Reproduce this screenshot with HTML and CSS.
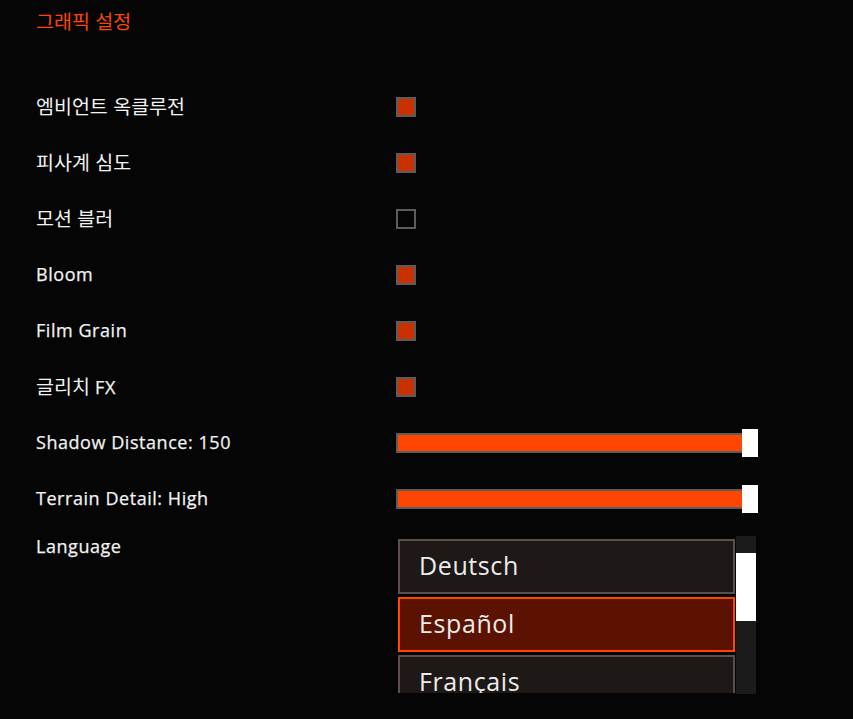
FILE: index.html
```html
<!DOCTYPE html>
<html lang="ko">
<head>
    <meta charset="UTF-8">
    <meta name="viewport" content="width=device-width, initial-scale=1.0">
    <title>그래픽 설정</title>
    <link rel="stylesheet" href="styles.css">
</head>
<body>
    <div class="panel">
        <div class="panel__title"><span class="ko">그래픽 설정</span></div>

        <div class="settings">
            <div class="row">
                <div class="row__label"><span class="ko">엠비언트 옥클루전</span></div>
                <div class="check check--on"></div>
            </div>
            <div class="row">
                <div class="row__label"><span class="ko">피사계 심도</span></div>
                <div class="check check--on"></div>
            </div>
            <div class="row">
                <div class="row__label"><span class="ko">모션 블러</span></div>
                <div class="check"></div>
            </div>
            <div class="row">
                <div class="row__label">Bloom</div>
                <div class="check check--on"></div>
            </div>
            <div class="row">
                <div class="row__label">Film Grain</div>
                <div class="check check--on"></div>
            </div>
            <div class="row">
                <div class="row__label"><span class="ko">글리치</span> FX</div>
                <div class="check check--on"></div>
            </div>
            <div class="row">
                <div class="row__label">Shadow Distance: 150</div>
                <div class="slider">
                    <div class="slider__track"><div class="slider__fill"></div></div>
                    <div class="slider__handle"></div>
                </div>
            </div>
            <div class="row">
                <div class="row__label">Terrain Detail: High</div>
                <div class="slider">
                    <div class="slider__track"><div class="slider__fill"></div></div>
                    <div class="slider__handle"></div>
                </div>
            </div>
            <div class="row row--top">
                <div class="row__label">Language</div>
                <div class="lang">
                    <div class="lang__list">
                        <div class="lang__item">Deutsch</div>
                        <div class="lang__item lang__item--active">Español</div>
                        <div class="lang__item">Français</div>
                    </div>
                    <div class="lang__bar"><div class="lang__thumb"></div></div>
                </div>
            </div>
        </div>
    </div>
</body>
</html>
```

FILE: styles.css
```css
*{
    margin: 0;
    padding: 0;
    box-sizing: border-box;
}

body {
    background: #050505;
    color: #f2f2f2;
    font-family: "Open Sans", "Noto Sans CJK KR", sans-serif;
    font-weight: 500;
    font-size: 18px;
    letter-spacing: 0.55px;
    -webkit-text-stroke: 0.25px #f2f2f2;
}

.ko {
    font-family: "Noto Sans CJK KR", sans-serif;
    font-weight: 400;
    font-size: 19.5px;
    letter-spacing: 0;
    -webkit-text-stroke: 0;
}

.panel {
    padding: 10px 36px 0 36px;
}

.panel__title {
    color: #ff4500;
    line-height: 22px;
    height: 22px;
    margin-bottom: 47px;
}

.row {
    display: grid;
    grid-template-columns: 360px 1fr;
    align-items: center;
    height: 56px;
}

.row--top {
    align-items: start;
    height: auto;
}

.row__label {
    line-height: 20px;
    height: 22px;
    white-space: nowrap;
}

.row--top .row__label {
    margin-top: 9px;
}

/* checkbox */
.check {
    width: 20px;
    height: 20px;
    border: 2px solid #5c5c5c;
    background: #050505;
}

.check--on {
    background: #c93200;
}

/* slider */
.slider {
    display: flex;
    align-items: center;
    width: 362px;
}

.slider__track {
    width: 346px;
    height: 20px;
    border: 2px solid #5c5c5c;
    border-right: 0;
    background: #1a1a1a;
}

.slider__fill {
    width: 100%;
    height: 100%;
    background: #ff4500;
}

.slider__handle {
    width: 16px;
    height: 28px;
    background: #ffffff;
}

/* language list */
.lang {
    display: flex;
    width: 360px;
    height: 158px;
    margin-top: 9px;
}

.lang__list {
    flex: 1;
    overflow: hidden;
    display: flex;
    flex-direction: column;
    gap: 3px;
    padding: 3px 1px 0 2px;
    height: 157px;
}

.lang__item {
    flex: none;
    height: 55px;
    border: 2px solid #5a4f4c;
    background: #1e1816;
    padding: 0 0 4px 19px;
    display: flex;
    align-items: center;
    font-size: 25px;
    font-weight: 400;
    letter-spacing: 0.6px;
    -webkit-text-stroke: 0;
    color: #ececec;
}

.lang__item--active {
    border-color: #ff4500;
    background: #5c1200;
}

.lang__bar {
    width: 20px;
    background: #1b1b1b;
    padding-top: 17px;
}

.lang__thumb {
    height: 68px;
    background: #ffffff;
}
```
